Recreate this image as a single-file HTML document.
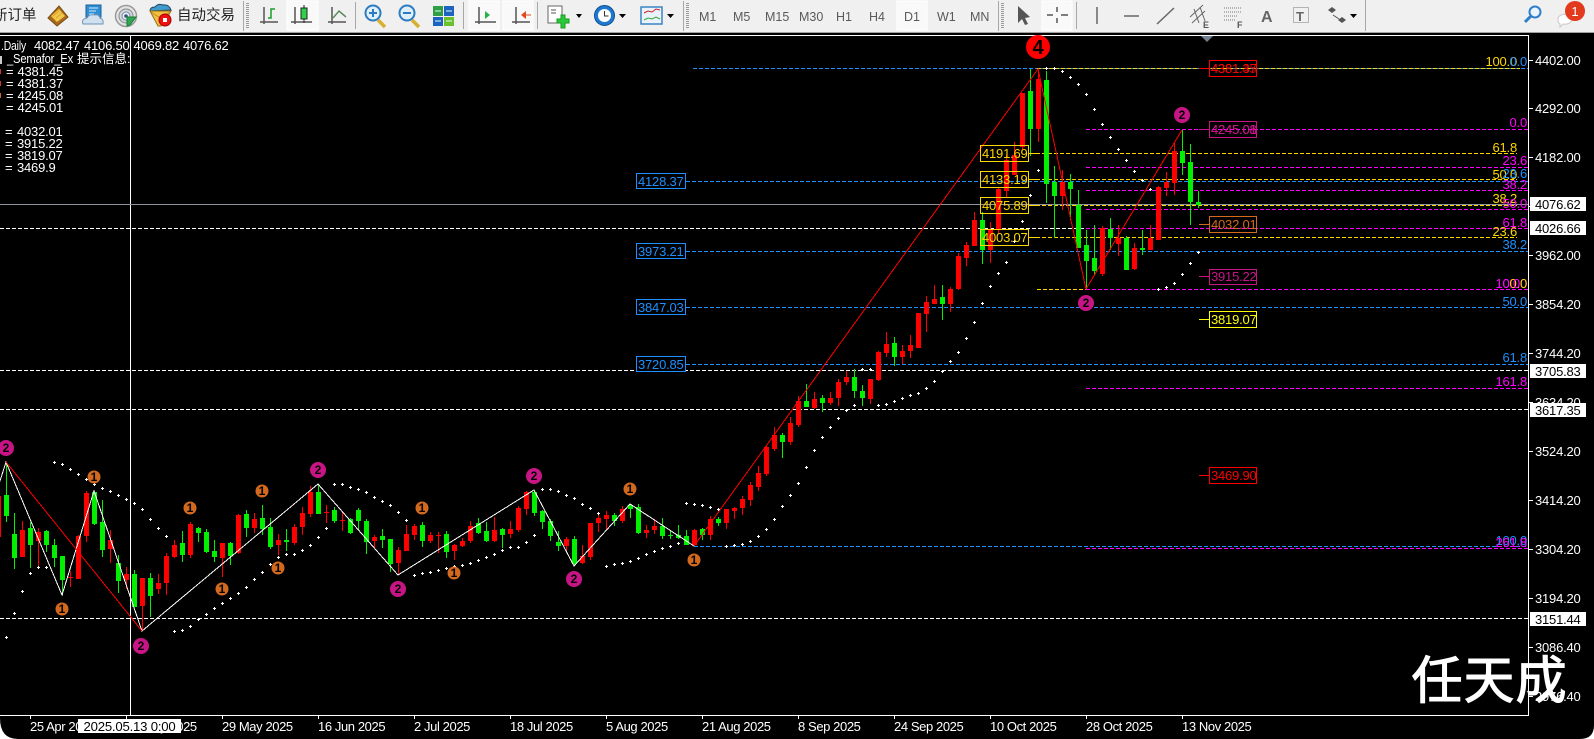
<!DOCTYPE html>
<html><head><meta charset="utf-8"><title>MT4 Chart</title>
<style>
html,body{margin:0;padding:0;background:#fff;width:1594px;height:739px;overflow:hidden}
svg{display:block;position:absolute;left:0;top:0}
text{font-family:"Liberation Sans","Noto Sans CJK SC",sans-serif;font-size:13px;letter-spacing:-.2px;white-space:pre}
.w{fill:#fff}.k{fill:#000}.y{fill:#ffd700}.m{fill:#f0f}.b{fill:#1e90ff}
.tf{fill:#5a5a5a;font-size:12.5px;letter-spacing:0}
.tb{fill:#222;font-size:14.5px;letter-spacing:0}
.t{letter-spacing:-.4px;fill:#fff}
.c{fill:#000;font-size:12px;font-weight:bold;text-anchor:middle;letter-spacing:0}
.crisp *{shape-rendering:crispEdges}
</style></head><body>
<svg width="1594" height="739" viewBox="0 0 1594 739" xmlns="http://www.w3.org/2000/svg">
<rect width="1594" height="33" fill="#f0f0f0"/>
<rect y="32" width="1594" height="1" fill="#a0a0a0"/>
<path d="M0 33H1594V725Q1594 739 1580 739H18Q0 739 0 718Z" fill="#000"/>
<text class="tb" x="-7" y="20">新订单</text>
<text class="tb" x="177" y="20">自动交易</text>
<!-- book -->
<path d="M48 18L59 6L68 17L57 26Z" fill="#a86a1c" stroke="#7a4a10"/><path d="M51 16L59 9L65 16L57 22Z" fill="#f2c648"/><path d="M53 16l6-5M56 18l6-5" stroke="#d9a52e"/>
<!-- terminal icon -->
<rect x="86" y="5" width="15" height="12" fill="#2f8fd4" stroke="#1a5f9a"/><path d="M89 8h9M89 11h7M89 14h5" stroke="#cfe8fb"/>
<path d="M83 24q-2-5 4-6q2-4 7-3q5-1 6 3q4 1 3 6z" fill="#cfe0ee" stroke="#6e93b5"/>
<!-- radar -->
<circle cx="126" cy="16" r="10.500" fill="#e4e4e4" stroke="#9a9a9a" stroke-width="1.500"/><circle cx="126" cy="16" r="7" fill="#cfd8df" stroke="#8a8a8a"/><circle cx="126" cy="16" r="4" fill="#eef" stroke="#7a8a9a"/><circle cx="126" cy="16" r="1.800" fill="#357"/><path d="M127 17v9l3-1 6-8z" fill="#2fa84f" stroke="#1e7a36"/>
<!-- autotrade -->
<path d="M150 11q0-4 5-4q3-4 8-2q6-1 8 5z" fill="#3f9bcc" stroke="#246"/><path d="M150 11h21l-6 10-4 5h-3z" fill="#f0c040" stroke="#96701c"/><path d="M151 12l9 6 10-6" stroke="#c88a20" fill="none"/><circle cx="165" cy="20" r="6" fill="#e11" stroke="#a00"/><rect x="163" y="18" width="4" height="4" fill="#fff"/>
<!-- separators -->
<g fill="#a8a8a8">
<rect x="243" y="1" width="1" height="30"/><rect x="355" y="2" width="1" height="27"/><rect x="463" y="2" width="1" height="27"/><rect x="537" y="2" width="1" height="27"/><rect x="683" y="1" width="1" height="30"/><rect x="998" y="1" width="1" height="30"/><rect x="1076" y="2" width="1" height="27"/><rect x="1365" y="0" width="1" height="31"/>
</g>
<g stroke="#9a9a9a" stroke-width="3" stroke-dasharray="1 1"><path d="M247.500 3V29M687.500 3V29M1002.500 3V29"/></g>
<!-- checked buttons -->
<g fill="#f9f9f9" stroke="#fff"><rect x="287" y="1" width="31" height="29"/><rect x="469" y="1" width="30" height="29"/><rect x="503" y="1" width="30" height="29"/><rect x="897" y="1" width="30" height="29"/><rect x="1042" y="1" width="30" height="29"/></g>
<!-- axes icons -->
<g stroke="#555" stroke-width="1.500" fill="none">
<path d="M264 7V24M260 22H278M295 7V24M291 22H312M332 7V24M328 22H346M479 7V24M475 22H496M516 7V24M512 22H530"/>
</g>
<path d="M268 18h3V9h4" stroke="#1a9a2a" stroke-width="1.500" fill="none"/>
<path d="M304 5V23" stroke="#222"/><rect x="301" y="8" width="6" height="11" fill="#2fd04a" stroke="#222"/>
<path d="M333 18l6-7 7 6" stroke="#5c8a5c" stroke-width="1.500" fill="none"/>
<path d="M485 11v8l5-4z" fill="#24b24a"/><path d="M526 11l-5 4 5 4z" fill="#e04a1a"/><path d="M523 15h8" stroke="#e04a1a"/>
<!-- magnifiers -->
<path d="M378 20l7 7" stroke="#d8b030" stroke-width="3.500"/><circle cx="373" cy="13" r="7.500" fill="#dff0fb" stroke="#2d7cc0" stroke-width="2"/><path d="M369 13h8M373 9v8" stroke="#2d7cc0" stroke-width="2"/>
<path d="M412 20l7 7" stroke="#d8b030" stroke-width="3.500"/><circle cx="407" cy="13" r="7.500" fill="#dff0fb" stroke="#2d7cc0" stroke-width="2"/><path d="M403 13h8" stroke="#2d7cc0" stroke-width="2"/>
<!-- tile -->
<rect x="433" y="6" width="10" height="10" fill="#2f9e44"/><rect x="444" y="6" width="10" height="10" fill="#1d63c0"/><rect x="433" y="17" width="10" height="9" fill="#1d63c0"/><rect x="444" y="17" width="10" height="9" fill="#6cc02c"/>
<path d="M435 11h6M446 11h6M435 21h6M446 21h6" stroke="#dfe" />
<!-- new chart -->
<rect x="548" y="6" width="14" height="17" fill="#fff" stroke="#666"/><path d="M551 10h5M551 13h5" stroke="#555"/>
<path d="M557 19h4v-4h4v4h4v4h-4v5h-4v-5h-4z" fill="#29c93a" stroke="#149a22"/>
<path d="M576 14h6l-3 4z" fill="#000"/>
<!-- clock -->
<circle cx="604.500" cy="15.500" r="10" fill="#1f78d0" stroke="#0f4e90"/><circle cx="604.500" cy="15.500" r="6.500" fill="#fff"/><path d="M604.500 11v5h4" stroke="#333" fill="none"/>
<path d="M619 14h7l-3.500 4z" fill="#000"/>
<!-- template -->
<rect x="641" y="7" width="21" height="17" fill="#eaf3fb" stroke="#3a84c4" stroke-width="1.500"/><path d="M644 13l4-2 4 1 4-3 4 1" stroke="#c22" fill="none"/><path d="M644 20l4-2 4 1 4-2 4 2" stroke="#3a3" fill="none"/>
<path d="M667 14h7l-3.500 4z" fill="#000"/>
<!-- timeframes -->
<text class="tf" x="699" y="21">M1</text><text class="tf" x="733" y="21">M5</text><text class="tf" x="765" y="21">M15</text><text class="tf" x="799" y="21">M30</text><text class="tf" x="836" y="21">H1</text><text class="tf" x="869" y="21">H4</text><text class="tf" x="904" y="21">D1</text><text class="tf" x="937" y="21">W1</text><text class="tf" x="970" y="21">MN</text>
<!-- cursor, crosshair -->
<path d="M1018 6v17l4-4 3 6 3-1-3-6 5-1z" fill="#555"/>
<path d="M1057 7v5M1057 18v5M1047 15h6M1061 15h7" stroke="#555" stroke-width="1.500"/>
<!-- line tools -->
<path d="M1097 7v17M1124 16h15M1157 24l17-16" stroke="#666" stroke-width="1.500" fill="none"/>
<path d="M1190 17l13-12M1192 23l13-12M1194 9l5 14M1200 7l5 14" stroke="#666" fill="none"/><text x="1203" y="28" style="font-size:9px;font-weight:bold;fill:#555">E</text>
<path d="M1224 8h18M1224 12h18M1224 16h14M1224 20h12" stroke="#777" stroke-dasharray="1 1"/><text x="1237" y="28" style="font-size:9px;font-weight:bold;fill:#555">F</text>
<text x="1261" y="22" style="font-size:16px;font-weight:bold;fill:#666">A</text>
<rect x="1293.500" y="7.500" width="15" height="15" fill="none" stroke="#777" stroke-dasharray="1 1"/><text x="1296" y="21" style="font-size:13px;font-weight:bold;fill:#666">T</text>
<path d="M1328 10l4-3 4 3-4 3zM1338 20l4-3 4 3-4 3z" fill="#555"/><path d="M1333 15l6 4" stroke="#555"/>
<path d="M1350 14h7l-3.500 4z" fill="#000"/>
<!-- search + chat -->
<circle cx="1535" cy="12" r="5.500" fill="#eaf4fc" stroke="#2f7fc8" stroke-width="2"/><path d="M1531 16l-6 6" stroke="#2f7fc8" stroke-width="3"/>
<path d="M1558 20a7 5 0 1 1 5 4l-3 3v-3a5 5 0 0 1-2-4z" fill="#fff" stroke="#c8c8c8"/>
<circle cx="1575" cy="11" r="10" fill="#e23a1c"/><text x="1575" y="16" style="font-size:13px;fill:#fff;text-anchor:middle;letter-spacing:0">1</text>

<!-- chart frame -->
<g class="crisp">
<rect x="0" y="35" width="1529" height="1" fill="#fff"/>
<rect x="0" y="715" width="1529" height="1" fill="#fff"/>
<rect x="1528" y="35" width="1" height="681" fill="#fff"/>
<rect x="130" y="35" width="1" height="680" fill="#fff"/>
<rect x="0" y="204" width="1528" height="1" fill="#8e949a"/>
</g>
<path d="M1201 36h12l-6 6z" fill="#708090"/>
<g class="crisp" stroke-width="1" fill="none" stroke-dasharray="4 2">
<path stroke="#fff" d="M0 228.500H1528M0 370.500H1528M0 409.500H1528M0 618.500H1528"/>
<path stroke="#1e90ff" d="M693 68.500H1528M686 181.500H1528M686 251.500H1528M686 307.500H1528M686 364.500H1528M694 546.500H1528"/>
<path stroke="#f0f" d="M1086 129.500H1528M1086 167.500H1528M1086 190.500H1528M1086 209.500H1528M1086 228.500H1528M1086 289.500H1528M1086 388.500H1528M1086 548.500H1528"/>
<path stroke="#ffd700" d="M1037 68.500H1520M1030 153.500H1517M1030 179.500H1517M1030 205.500H1517M1030 237.500H1517M1037 289.500H1086"/>
</g>
<!-- candles and dots are generated here -->
<g id="cd" class="crisp"></g>
<g class="crisp" fill="none">
<polyline stroke="#fff" points="-1,484 6,462 62,595 94,491 142,631 318,484 398,575 534,490 574,566 630,504 694,546"/>
<polyline stroke="#f00" points="6,462 142,631"/>
<polyline stroke="#f00" points="694,546 1038,69 1086,289 1182,130"/>
</g>
<g id="dots" class="crisp"></g>
<!-- semafor markers -->
<g fill="#d2691e">
<circle cx="94" cy="477" r="6.500"/><circle cx="62" cy="609" r="6.500"/><circle cx="190" cy="508" r="6.500"/><circle cx="262" cy="491" r="6.500"/><circle cx="278" cy="568" r="6.500"/><circle cx="222" cy="589" r="6.500"/><circle cx="422" cy="508" r="6.500"/><circle cx="630" cy="489" r="6.500"/><circle cx="454" cy="573" r="6.500"/><circle cx="694" cy="560" r="6.500"/>
</g>
<g fill="#c71585">
<circle cx="6" cy="448" r="8"/><circle cx="318" cy="470" r="8"/><circle cx="141" cy="646" r="8"/><circle cx="534" cy="476" r="8"/><circle cx="398" cy="589" r="8"/><circle cx="574" cy="579" r="8"/><circle cx="1182" cy="115" r="8"/><circle cx="1086" cy="303" r="8"/>
</g>
<circle cx="1038" cy="47" r="12" fill="#f00"/>
<text class="c" x="94" y="481">1</text><text class="c" x="62" y="613">1</text><text class="c" x="190" y="512">1</text><text class="c" x="262" y="495">1</text><text class="c" x="278" y="572">1</text><text class="c" x="222" y="593">1</text><text class="c" x="422" y="512">1</text><text class="c" x="630" y="493">1</text><text class="c" x="454" y="577">1</text><text class="c" x="694" y="564">1</text>
<text class="c" x="6" y="452">2</text><text class="c" x="318" y="474">2</text><text class="c" x="141" y="650">2</text><text class="c" x="534" y="480">2</text><text class="c" x="398" y="593">2</text><text class="c" x="574" y="583">2</text><text class="c" x="1182" y="119">2</text><text class="c" x="1086" y="307">2</text>
<text class="c" x="1038" y="54" style="font-size:20px">4</text>

<!-- left blue boxes -->
<g fill="#000" stroke="#1e90ff" class="crisp">
<rect x="636.500" y="173.500" width="49" height="15"/><rect x="636.500" y="243.500" width="49" height="15"/><rect x="636.500" y="299.500" width="49" height="15"/><rect x="636.500" y="356.500" width="49" height="15"/>
</g>
<g class="b"><text x="638" y="186">4128.37</text><text x="638" y="256">3973.21</text><text x="638" y="312">3847.03</text><text x="638" y="369">3720.85</text></g>
<!-- yellow left boxes -->
<g fill="none" stroke="#ffd700" class="crisp">
<rect x="980.500" y="145.500" width="48" height="16"/><rect x="980.500" y="171.500" width="48" height="16"/><rect x="980.500" y="197.500" width="48" height="16"/><rect x="980.500" y="229.500" width="48" height="16"/>
<path d="M1029 153.500h10M1029 179.500h10M1029 205.500h10M1029 237.500h10"/>
</g>
<g class="y"><text x="982" y="158">4191.69</text><text x="982" y="184">4133.19</text><text x="982" y="210">4075.89</text><text x="982" y="242">4003.07</text></g>
<!-- right boxes -->
<g fill="none" class="crisp">
<rect x="1209.500" y="60.500" width="47" height="16" stroke="#f00"/><path d="M1199 68.500h10" stroke="#f00"/>
<rect x="1209.500" y="121.500" width="47" height="16" stroke="#c71585"/><path d="M1199 129.500h10" stroke="#c71585"/>
<rect x="1209.500" y="216.500" width="47" height="16" stroke="#d2691e"/><path d="M1199 224.500h10" stroke="#d2691e"/>
<rect x="1209.500" y="269.500" width="47" height="15" stroke="#c71585"/><path d="M1199 276.500h10" stroke="#c71585"/>
<rect x="1209.500" y="311.500" width="47" height="16" stroke="#ff0"/><path d="M1199 319.500h10" stroke="#ff0"/>
<rect x="1209.500" y="467.500" width="47" height="16" stroke="#f00"/><path d="M1199 475.500h10" stroke="#f00"/>
</g>
<text x="1211" y="73" fill="#f00">4381.37</text><text x="1211" y="73" fill="#f00" opacity=".7">4381.45</text>
<text x="1211" y="134" fill="#c71585">4245.08</text><text x="1211" y="134" fill="#c71585">4245.01</text>
<text x="1211" y="229" fill="#d2691e">4032.01</text>
<text x="1211" y="281" fill="#c71585">3915.22</text>
<text x="1211" y="324" fill="#ff0">3819.07</text>
<text x="1211" y="480" fill="#f00">3469.90</text>
<!-- fib labels -->
<g style="text-anchor:end">
<text class="y" x="1517" y="66">100.0</text><text class="b" x="1527" y="66">0.0</text>
<text class="m" x="1527" y="127">0.0</text>
<text class="y" x="1517" y="152">61.8</text>
<text class="m" x="1527" y="165">23.6</text>
<text class="y" x="1517" y="179">50.0</text><text class="b" x="1527" y="178">23.6</text>
<text class="m" x="1527" y="189">38.2</text>
<text class="y" x="1517" y="203">38.2</text><text class="m" x="1527" y="208">50.0</text>
<text class="m" x="1527" y="227">61.8</text>
<text class="y" x="1517" y="236">23.6</text>
<text class="b" x="1527" y="249">38.2</text>
<text class="m" x="1527" y="288">100.0</text><text class="y" x="1527" y="288">0.0</text><text class="m" x="1520" y="288">0.0</text>
<text class="b" x="1527" y="306">50.0</text>
<text class="b" x="1527" y="362">61.8</text>
<text class="m" x="1527" y="386">161.8</text>
<text class="b" x="1527" y="545">100.0</text><text class="m" x="1527" y="547">261.8</text>
</g>
<!-- price axis -->
<g class="crisp" fill="#fff">
<rect x="1529" y="60" width="4" height="1"/><rect x="1529" y="108" width="4" height="1"/><rect x="1529" y="157" width="4" height="1"/><rect x="1529" y="206" width="4" height="1"/><rect x="1529" y="255" width="4" height="1"/><rect x="1529" y="304" width="4" height="1"/><rect x="1529" y="353" width="4" height="1"/><rect x="1529" y="402" width="4" height="1"/><rect x="1529" y="451" width="4" height="1"/><rect x="1529" y="500" width="4" height="1"/><rect x="1529" y="549" width="4" height="1"/><rect x="1529" y="598" width="4" height="1"/><rect x="1529" y="647" width="4" height="1"/><rect x="1529" y="696" width="4" height="1"/>
</g>
<g class="w">
<text x="1535" y="65">4402.00</text><text x="1535" y="113">4292.00</text><text x="1535" y="162">4182.00</text><text x="1535" y="260">3962.00</text><text x="1535" y="309">3854.20</text><text x="1535" y="358">3744.20</text><text x="1535" y="407">3634.20</text><text x="1535" y="456">3524.20</text><text x="1535" y="505">3414.20</text><text x="1535" y="554">3304.20</text><text x="1535" y="603">3194.20</text><text x="1535" y="652">3086.40</text><text x="1535" y="701">2976.40</text>
</g>
<g fill="#fff" class="crisp">
<rect x="1530" y="197" width="56" height="14"/><rect x="1530" y="221" width="56" height="14"/><rect x="1530" y="364" width="56" height="14"/><rect x="1530" y="403" width="56" height="14"/><rect x="1530" y="612" width="56" height="14"/>
</g>
<g class="k">
<text x="1535" y="209">4076.62</text><text x="1535" y="233">4026.66</text><text x="1535" y="376">3705.83</text><text x="1535" y="415">3617.35</text><text x="1535" y="624">3151.44</text>
</g>
<!-- time axis -->
<path class="crisp" stroke="#fff" d="M30.500 716v3M126.500 716v3M222.500 716v3M318.500 716v3M414.500 716v3M510.500 716v3M606.500 716v3M702.500 716v3M798.500 716v3M894.500 716v3M990.500 716v3M1086.500 716v3M1182.500 716v3"/>
<text class="t" x="30" y="731">25 Apr 2025</text><text class="t" x="126" y="731">13 May 2025</text><text class="t" x="222" y="731">29 May 2025</text><text class="t" x="318" y="731">16 Jun 2025</text><text class="t" x="414" y="731">2 Jul 2025</text><text class="t" x="510" y="731">18 Jul 2025</text><text class="t" x="606" y="731">5 Aug 2025</text><text class="t" x="702" y="731">21 Aug 2025</text><text class="t" x="798" y="731">8 Sep 2025</text><text class="t" x="894" y="731">24 Sep 2025</text><text class="t" x="990" y="731">10 Oct 2025</text><text class="t" x="1086" y="731">28 Oct 2025</text><text class="t" x="1182" y="731">13 Nov 2025</text>
<rect x="78" y="719" width="103" height="14" fill="#fff"/>
<text x="83.500" y="731" fill="#000" textLength="92" lengthAdjust="spacingAndGlyphs">2025.05.13 0:00</text>
<!-- info text -->
<g class="w">
<text x="1" y="50" textLength="25" lengthAdjust="spacingAndGlyphs">.Daily</text><text x="34" y="50">4082.47</text><text x="84" y="50">4106.50</text><text x="133.500" y="50">4069.82</text><text x="183" y="50">4076.62</text>
<text x="7" y="63" textLength="66" lengthAdjust="spacingAndGlyphs">_Semafor_Ex</text><text x="77" y="63" style="font-size:12.500px;letter-spacing:0">提示信息:</text>
<text x="6" y="76">=</text><text x="17.500" y="76">4381.45</text>
<text x="6" y="88">=</text><text x="17.500" y="88">4381.37</text>
<text x="6" y="100">=</text><text x="17.500" y="100">4245.08</text>
<text x="6" y="112">=</text><text x="17.500" y="112">4245.01</text>
<text x="5" y="136">=</text><text x="17" y="136">4032.01</text>
<text x="5" y="148">=</text><text x="17" y="148">3915.22</text>
<text x="5" y="160">=</text><text x="17" y="160">3819.07</text>
<text x="5" y="172">=</text><text x="17" y="172">3469.9</text>
</g>
<rect x="0" y="56" width="2" height="8" fill="#ccc"/><rect x="0" y="69" width="1" height="5" fill="#c33"/><rect x="0" y="81" width="1" height="5" fill="#c33"/><rect x="0" y="93" width="1" height="5" fill="#c63"/>
<!-- watermark -->
<text x="1411" y="699" style="font-size:52px;letter-spacing:0;fill:#fff;font-family:'Noto Sans CJK SC','WenQuanYi Zen Hei',sans-serif;font-weight:500">任天成</text>
</svg>
<script>
var R='#f00',G='#00f000';
var s='R -2 198 198 320 320;G 6 97 195 258 275;G 14 250 312 383 418;R 22 273 300 380 381;G 30 275 295 345 413;R 38 295 305 333 410;G 46 300 303 345 365;G 54 328 345 383 410;G 62 378 378 450 495;R 70 423 442 445 470;R 78 315 318 447 447;R 86 183 189 318 335;G 94 185 185 282 285;G 102 210 276 360 380;R 110 300 330 357 400;G 118 376 400 453 488;R 126 412 432 450 478;G 134 420 433 530 530;R 142 443 443 527 603;G 150 430 444 497 560;R 158 432 459 477 492;R 166 370 378 459 495;R 174 330 345 381 385;G 182 303 339 375 395;R 190 277 281 375 383;G 198 290 293 309 335;G 206 297 305 366 368;G 214 330 363 381 397;R 222 339 339 384 440;G 230 335 339 378 405;R 238 252 255 368 371;G 246 240 252 293 321;R 254 249 267 294 309;G 262 225 264 298 315;G 270 264 291 351 356;R 278 312 330 345 375;G 286 297 330 335 363;R 294 282 291 339 344;R 302 231 249 290 315;R 310 168 186 252 261;G 318 165 186 252 252;R 326 225 246 250 279;G 334 231 240 273 278;R 342 243 270 272 303;G 350 265 268 310 312;G 358 234 240 272 300;G 366 268 273 335 372;R 374 315 321 333 355;G 382 297 318 330 354;G 390 327 327 402 425;R 398 352 360 400 435;R 406 285 312 363 363;R 414 282 288 315 330;G 422 277 285 333 350;R 430 305 315 333 340;R 438 306 315 318 370;G 446 303 312 366 384;R 454 342 345 363 390;R 462 324 333 348 351;R 470 273 288 333 340;G 478 264 279 309 312;G 486 276 303 333 336;R 494 261 300 333 336;G 502 294 297 315 354;R 510 273 297 312 324;R 518 228 234 300 306;R 526 183 186 237 255;G 534 180 186 249 258;G 542 240 243 276 297;G 550 267 273 318 333;G 558 304 336 348 363;R 566 321 327 348 366;G 574 318 327 402 408;R 582 345 378 399 402;R 590 279 279 381 390;R 598 250 264 279 306;R 606 243 255 267 300;G 614 249 255 273 288;R 622 228 238 273 279;G 630 222 225 237 264;G 638 222 231 309 312;R 646 285 300 309 324;R 654 267 288 300 312;G 662 264 288 318 327;G 670 300 316 319 327;G 678 285 315 325 327;G 686 300 318 345 345;R 694 297 300 345 345;';
var s2='G 702 528 529 535 540;R 710 516 519 535 540;G 718 517 519 523 526;R 726 509 509 523 529;R 734 507 508 511 519;R 742 496 499 508 515;R 750 482 485 500 506;R 758 466 473 487 491;R 766 445 447 474 476;R 774 427 435 449 451;G 782 433 435 442 458;R 790 417 423 442 445;R 798 396 401 425 427;G 806 384 401 407 407;R 814 392 399 408 409;G 822 395 398 403 412;R 830 392 398 403 405;R 838 379 382 398 406;R 846 371 377 382 385;G 854 369 377 391 398;G 862 385 391 398 406;R 870 379 379 399 404;R 878 351 352 380 381;R 886 332 344 353 357;G 894 337 343 357 366;R 902 345 351 357 364;R 910 335 345 351 358;R 918 313 313 348 348;R 926 296 302 314 332;R 934 285 299 304 304;G 942 285 297 304 320;R 950 287 289 304 312;R 958 253 256 289 290;R 966 242 245 258 266;R 974 212 220 246 246;G 982 212 220 250 264;R 990 222 229 250 263;R 998 187 189 230 233;R 1006 155 160 191 197;R 1014 142 155 175 175;R 1022 93 93 147 150;G 1030 69 91 129 156;R 1038 69 79 129 142;G 1046 71 80 184 203;G 1054 166 182 196 238;R 1062 170 182 196 210;G 1070 174 182 189 220;G 1078 190 205 248 248;G 1086 230 245 261 289;G 1094 225 258 271 275;R 1102 226 228 274 276;G 1110 218 229 238 250;R 1118 225 238 244 256;G 1126 236 238 270 270;R 1134 243 248 269 270;G 1142 230 248 250 255;R 1150 225 238 250 250;R 1158 186 187 240 240;R 1166 172 182 188 196;R 1174 143 151 183 195;G 1182 130 151 163 175;G 1190 144 162 202 225;G 1198 191 202 205 208';
var out=[];
function add(c,x,a,b,d,e){
 a=Math.round(a);b=Math.round(b);d=Math.round(d);e=Math.round(e);
 var col=c=='R'?R:G;
 out.push('<rect x="'+x+'" y="'+a+'" width="1" height="'+(e-a)+'" fill="'+col+'"/>');
 out.push('<rect x="'+(x-2)+'" y="'+b+'" width="5" height="'+Math.max(1,d-b)+'" fill="'+col+'"/>');
}
s.split(';').forEach(function(r){if(!r)return;var p=r.split(' ');var v=p.slice(1).map(Number);add(p[0],v[0],430+v[1]/3,430+v[2]/3,430+v[3]/3,430+v[4]/3);});
s2.split(';').forEach(function(r){if(!r)return;var p=r.split(' ');var v=p.slice(1).map(Number);add(p[0],v[0],v[1],v[2],v[3],v[4]);});
document.getElementById('cd').innerHTML=out.join('');
var d='6,637 14,613 22,591 30,573 38,567 46,567 54,462 62,464 70,469 78,474 86,479 94,484 102,488 110,491 118,495 126,499 134,503 142,509 150,519 158,528 166,536 174,631 182,630 190,626 198,619 206,614 214,608 222,603 230,598 238,593 246,587 254,579 262,572 270,564 278,557 286,554 294,554 302,550 310,545 318,537 326,528 334,484 342,484 350,487 358,489 366,492 374,497 382,501 390,505 398,512 406,520 414,575 422,573 430,572 438,570 446,568 454,566 462,565 470,563 478,560 486,557 494,554 502,550 510,547 518,547 526,542 534,535 542,489 550,489 558,491 566,495 574,498 582,504 590,508 598,513 606,566 614,564 622,563 630,561 638,558 646,554 654,551 662,548 670,546 678,543 686,503 694,504 702,505 710,507 718,509 726,546 734,545 742,544 750,541 758,536 766,529 774,519 782,506 790,495 798,483 806,467 814,450 822,437 830,427 838,418 846,410 854,405 862,369 870,369 878,405 886,404 894,401 902,398 910,395 918,393 926,388 934,381 942,371 950,361 958,352 966,338 974,322 982,303 990,286 998,273 1006,262 1014,241 1022,221 1030,195 1038,170 1046,68 1054,68 1062,71 1070,77 1078,84 1086,94 1094,109 1102,124 1110,137 1118,149 1126,160 1134,171 1142,180 1150,189 1158,289 1166,287 1174,283 1182,274 1190,263 1198,252';
var p='';d.split(' ').forEach(function(q){var a=q.split(',');var x=+a[0],y=+a[1];p+='M'+(x-1)+' '+(y+.5)+'h3M'+(x+.5)+' '+(y-1)+'v3';});
document.getElementById('dots').innerHTML='<path d="'+p+'" stroke="#fff" fill="none"/>';
</script>
</body></html>
